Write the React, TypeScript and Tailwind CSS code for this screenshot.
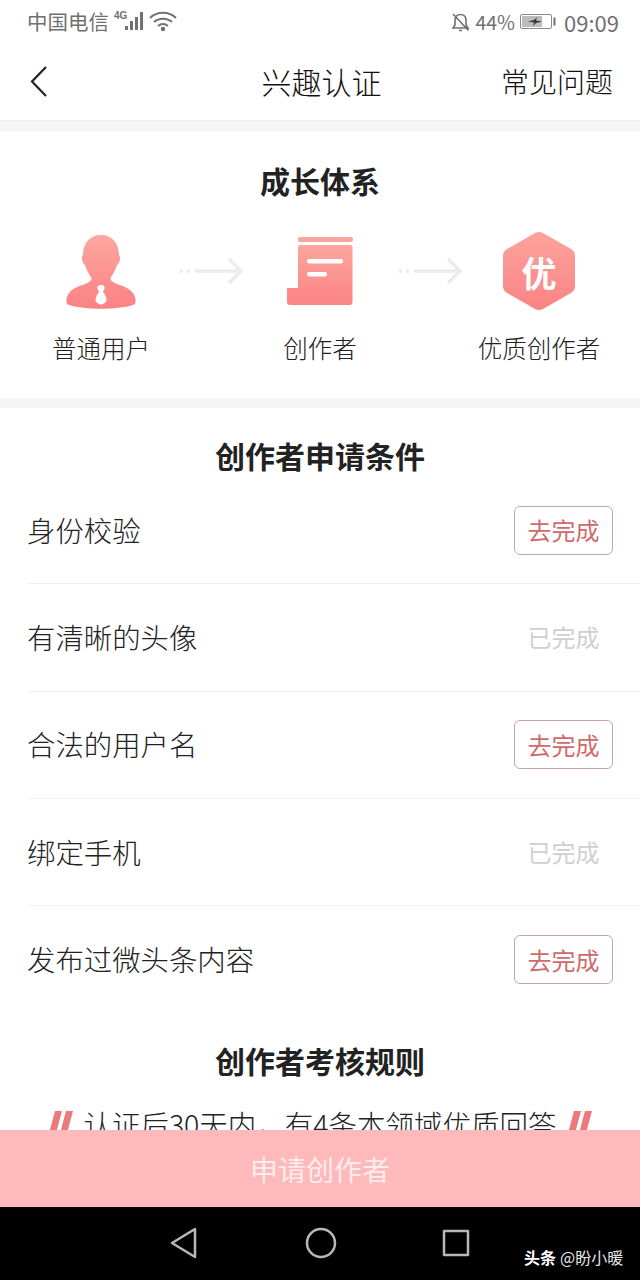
import React from "react";

const cjk = "font-['Noto_Sans_CJK_SC','Noto_Sans',sans-serif]";

const rows = [
  { name: "身份校验", done: false },
  { name: "有清晰的头像", done: true },
  { name: "合法的用户名", done: false },
  { name: "绑定手机", done: true },
  { name: "发布过微头条内容", done: false },
];

const StatusBar: React.FC = () => (
  <div className="h-[42px] flex items-center justify-between pl-[27px] pr-[21px] pt-[1px] text-[#707070]">
    <div className="flex items-center">
      <span className="text-[20.5px] leading-none">中国电信</span>
      <svg width="66" height="22" viewBox="0 0 66 22" className="ml-[3px]">
        <text x="2" y="8" fontSize="10" fontWeight="700" fontFamily="Liberation Sans" fill="#707070">4G</text>
        <rect x="13" y="15" width="3" height="4" fill="#707070" />
        <rect x="18" y="10" width="3" height="9" fill="#707070" />
        <rect x="23" y="6" width="3" height="13" fill="#707070" />
        <rect x="28" y="1" width="3" height="18" fill="#707070" />
        <path d="M38 7c7-7 19-7 26 0M42 11c5-4.500 13-4.500 18 0M46 15c3-2.500 7-2.500 10 0" fill="none" stroke="#707070" strokeWidth="2" />
        <circle cx="51" cy="18" r="2.200" fill="#707070" />
      </svg>
    </div>
    <div className="flex items-center">
      <svg width="20" height="20" viewBox="0 0 20 20" fill="none" stroke="#707070" strokeWidth="1.600">
        <path d="M2 16h15l-2-3V8C15 5 13 2.500 9.500 2.500S4 5 4 8v5zM8 18.500h3M2 2l15.500 16.500" />
      </svg>
      <span className="ml-[4px] text-[19.5px] leading-none">44%</span>
      <svg width="36" height="15" viewBox="0 0 36 15" className="ml-[5px]">
        <rect x="0.500" y="0.500" width="31" height="14" rx="1.500" fill="none" stroke="#8a8a8a" />
        <rect x="2" y="2" width="20" height="11" fill="#bcbcbc" />
        <path d="M8 7.500 14 6l3-3-1 3.500 6 1-6 1.500-3 3 1-3.500z" fill="#3a3a3a" />
        <rect x="33.500" y="3.500" width="2" height="8" fill="#707070" />
      </svg>
      <span className="ml-[8px] text-[22px] leading-none">09:09</span>
    </div>
  </div>
);

const Header: React.FC = () => (
  <div className="h-[78px] grid grid-cols-3 items-center pl-[30px] pr-[27px] text-[#111]">
    <svg width="18" height="32" viewBox="0 0 18 32" fill="none" stroke="#222" strokeWidth="2.200" className="justify-self-start mt-[2px]">
      <path d="M16 1 2 15.500 16 30" />
    </svg>
    <span className="justify-self-center whitespace-nowrap text-[30px] leading-none font-light">兴趣认证</span>
    <span className="justify-self-end whitespace-nowrap text-[28px] leading-none font-light">常见问题</span>
  </div>
);

const Arrow: React.FC = () => (
  <svg width="64" height="28" viewBox="0 0 64 28" fill="none" stroke="#ececec" strokeWidth="3.500">
    <path d="M1 14h3M8 14h3M16 14h46M50 2l12 12-12 12" />
  </svg>
);

const Person: React.FC = () => (
  <svg width="70" height="74" viewBox="0 0 70 74" className="mt-[2px]">
    <defs>
      <linearGradient id="pg" x1="0" y1="0" x2="0" y2="1">
        <stop offset="0" stopColor="#fca89f" />
        <stop offset="1" stopColor="#fb8183" />
      </linearGradient>
    </defs>
    <path
      d="M35 0C46 0 53 8 53 20 55 22 54 28 51 30 49 36 47 39 45 42 44 44 45 46 47 47 54 51 66 52 69 62 70 66 70 69 67 70 50 75 20 75 3 70 0 69 0 66 1 62 4 52 16 51 23 47 25 46 26 44 25 42 23 39 21 36 19 30 16 28 15 22 17 20 17 8 24 0 35 0Z"
      fill="url(#pg)"
    />
    <path d="M35 50c3 0 4 2 3.500 3.500L37 57c2 2 3.500 6 3.500 8 0 2-3 4.500-5.500 4.500S29.500 67 29.500 65c0-2 1.500-6 3.500-8l-1.500-3.500C31 52 32 50 35 50z" fill="#fff" />
  </svg>
);

const Scroll: React.FC = () => (
  <svg width="67" height="68" viewBox="0 0 67 68">
    <defs>
      <linearGradient id="sg" x1="0" y1="0" x2="0" y2="1">
        <stop offset="0" stopColor="#fca69c" />
        <stop offset="1" stopColor="#fb8385" />
      </linearGradient>
    </defs>
    <rect x="11" y="0" width="55" height="5" rx="2" fill="#f9a79c" />
    <path d="M13 8h50c1.500 0 2.500 1 2.500 2.500V65c0 1.500-1 3-2.500 3H3c-2 0-3-1-3-3V51h11V10c0-1 1-2 2-2z" fill="url(#sg)" />
    <rect x="20" y="22" width="36" height="4.500" rx="2" fill="#fff" />
    <rect x="20" y="35" width="20" height="4.500" rx="2" fill="#fff" />
  </svg>
);

const Badge: React.FC = () => (
  <div className="relative w-[72px] h-[80px] flex items-center justify-center">
    <svg width="72" height="80" viewBox="0 0 72 80" className="absolute inset-0">
      <defs>
        <linearGradient id="bg" x1="0" y1="0" x2="0" y2="1">
          <stop offset="0" stopColor="#fca39a" />
          <stop offset="1" stopColor="#fb8385" />
        </linearGradient>
      </defs>
      <path
        d="M32 2c2.500-1.300 5.500-1.300 8 0l28 16c2.500 1.400 4 4 4 6.500v31c0 2.500-1.500 5.100-4 6.500L40 78c-2.500 1.300-5.500 1.300-8 0L4 62c-2.500-1.400-4-4-4-6.500v-31C0 22 1.500 19.400 4 18z"
        fill="url(#bg)"
      />
    </svg>
    <span className="relative text-white font-bold text-[35px] leading-none">优</span>
  </div>
);

const Step: React.FC<{ icon: React.ReactNode; label: string }> = ({ icon, label }) => (
  <div className="w-[130px] flex flex-col items-center">
    <div className="h-[80px] flex items-center justify-center">{icon}</div>
    <div className="mt-[25px] text-[24.5px] leading-none font-light text-[#222] whitespace-nowrap">{label}</div>
  </div>
);

const Row: React.FC<{ name: string; done: boolean; last: boolean }> = ({ name, done, last }) => (
  <div className={`h-[107.250px] ml-[27px] pr-[27px] flex items-center justify-between ${last ? "" : "border-b border-[#f2f2f2]"}`}>
    <span className="text-[28.4px] leading-none font-light text-[#222]">{name}</span>
    {done ? (
      <span className="w-[99px] text-center text-[24px] leading-none text-[#cfcfd2]">已完成</span>
    ) : (
      <span className="w-[99px] h-[49px] flex items-center justify-center rounded-[6px] border border-[#c9a4a6] text-[24px] leading-none text-[#cf6a6c]">
        去完成
      </span>
    )}
  </div>
);

const Slashes: React.FC = () => (
  <svg width="25" height="26" viewBox="0 0 25 26" className="shrink-0">
    <path d="M7 0h7L7 26H0zM18 0h7l-7 26h-7z" fill="#ea7a7c" />
  </svg>
);

const App: React.FC = () => (
  <div className={`w-[640px] h-[1280px] overflow-hidden flex flex-col bg-white ${cjk}`}>
    <div className="flex-1 overflow-hidden">
      <StatusBar />
      <Header />
      <div className="h-[11px] bg-[#f5f5f7] border-t border-[#eeeeee]" />

      <section className="h-[267px] pt-[31px]">
        <h2 className="text-center text-[30px] leading-[36px] font-bold text-[#222]">成长体系</h2>
        <div className="mt-[33px] px-[36px] flex items-start justify-between">
          <Step icon={<Person />} label="普通用户" />
          <div className="mt-[26px]"><Arrow /></div>
          <Step icon={<Scroll />} label="创作者" />
          <div className="mt-[26px]"><Arrow /></div>
          <Step icon={<Badge />} label="优质创作者" />
        </div>
      </section>

      <div className="h-[10px] bg-[#f5f5f7]" />

      <section className="pt-[29px]">
        <h2 className="text-center text-[30px] leading-[36px] font-bold text-[#222]">创作者申请条件</h2>
        <div className="mt-[4px]">
          {rows.map((r, i) => (
            <Row key={r.name} name={r.name} done={r.done} last={i === rows.length - 1} />
          ))}
        </div>
        <h2 className="mt-[29px] text-center text-[30px] leading-[36px] font-bold text-[#222]">创作者考核规则</h2>
        <div className="mt-[28px] flex items-center justify-center gap-[10px]">
          <Slashes />
          <span className="text-[28.5px] leading-[36px] font-light text-[#222] whitespace-nowrap">认证后30天内，有4条本领域优质回答</span>
          <Slashes />
        </div>
      </section>
    </div>

    <div className="h-[77px] bg-[#feb9bb] flex items-center justify-center text-[28px] leading-none text-[#fdecec]">
      申请创作者
    </div>

    <div className="relative h-[73px] bg-black flex items-center justify-center pb-[2px]">
      <svg width="28" height="32" viewBox="0 0 28 32" fill="none" stroke="#b8b8b8" strokeWidth="2.500" strokeLinejoin="round">
        <path d="M25 2v28L2 16z" />
      </svg>
      <svg width="32" height="32" viewBox="0 0 32 32" fill="none" stroke="#b8b8b8" strokeWidth="2.500" className="ml-[107px]">
        <circle cx="16" cy="16" r="14" />
      </svg>
      <svg width="28" height="28" viewBox="0 0 28 28" fill="none" stroke="#b8b8b8" strokeWidth="2.500" strokeLinejoin="round" className="ml-[105px]">
        <rect x="2" y="2" width="24" height="24" />
      </svg>
      <div className="absolute left-[524px] top-[40px] flex items-center text-[#e6e6e6] text-[16px] leading-[20px] whitespace-nowrap">
        <span className="font-bold text-white">头条</span>
        <span className="ml-[4px]">@盼小暖</span>
      </div>
    </div>
  </div>
);

export default App;
